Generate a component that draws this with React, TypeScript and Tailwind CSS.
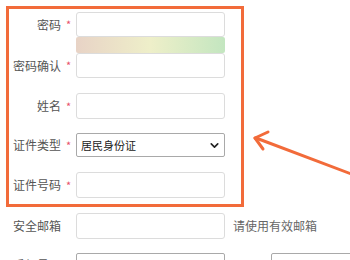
import React from "react";
import { ChevronDown } from "lucide-react";

const Label = ({ text, required = true }: { text: string; required?: boolean }) => (
  <div className="flex items-center shrink-0">
    <span className="w-[52px] text-right text-[12px] text-[#555] whitespace-nowrap">{text}</span>
    <span className="w-[15px] text-center text-[11px] text-[#e8506a]">{required ? "*" : ""}</span>
  </div>
);

const Field = ({ h = "h-[26px]" }: { h?: string }) => (
  <input className={`shrink-0 w-[149px] ${h} border border-[#dcdcdc] rounded-[3px] bg-white outline-none`} />
);

export default function App() {
  return (
    <div
      className="relative w-[350px] h-[260px] overflow-hidden bg-white"
      style={{ fontFamily: '"Microsoft YaHei", "Noto Sans CJK SC", sans-serif' }}
    >
      {/* highlighted required block */}
      <div className="ml-[6px] mt-[6px] w-[238px] h-[201px] border-[3px] border-[#f26b3a] pt-[3px]">
        <div className="flex items-center">
          <Label text="密码" />
          <Field h="h-[25px]" />
        </div>
        <div className="ml-[67px] w-[149px] h-[16px] rounded-[2px] bg-gradient-to-r from-[#e8d3c6] via-[#eeefc9] to-[#c3e6c0]" />
        <div className="flex items-center">
          <Label text="密码确认" />
          <Field h="h-[25px]" />
        </div>
        <div className="flex items-center mt-[15px]">
          <Label text="姓名" />
          <Field />
        </div>
        <div className="flex items-center mt-[14px]">
          <Label text="证件类型" />
          <div className="relative shrink-0 w-[149px] h-[24px] border border-[#a9a9a9] rounded-[2px] flex items-center pl-[4px]">
            <span className="text-[11px] text-[#222]">居民身份证</span>
            <ChevronDown size={13} strokeWidth={3} className="absolute right-[3px] text-[#222]" />
          </div>
        </div>
        <div className="flex items-center mt-[15px]">
          <Label text="证件号码" />
          <Field />
        </div>
      </div>

      {/* rest of the form */}
      <div className="pl-[9px]">
        <div className="flex items-center mt-[6px]">
          <Label text="安全邮箱" required={false} />
          <Field />
          <span className="ml-[8px] text-[12px] text-[#666] whitespace-nowrap">请使用有效邮箱</span>
        </div>
        <div className="flex items-start mt-[14px]">
          <div className="pt-[3px]">
            <Label text="手机号码" required={false} />
          </div>
          <input className="shrink-0 w-[149px] h-[26px] border border-[#a9a9a9] rounded-[2px] bg-white" />
          <span className="shrink-0 ml-[15px] mt-[4px] text-[12px] text-[#555] w-[31px]">籍贯</span>
          <input className="shrink-0 w-[90px] h-[26px] border border-[#a9a9a9] rounded-[2px] bg-white" />
        </div>
      </div>

      {/* pointer arrow */}
      <svg className="absolute left-0 top-0" width="350" height="260" viewBox="0 0 350 260">
        <g stroke="#f26b3a" strokeWidth="3" strokeLinecap="round" fill="none">
          <line x1="256" y1="138" x2="354" y2="175" />
          <line x1="255" y1="138" x2="268" y2="132" />
          <line x1="255" y1="138" x2="263" y2="149" />
        </g>
      </svg>
    </div>
  );
}
